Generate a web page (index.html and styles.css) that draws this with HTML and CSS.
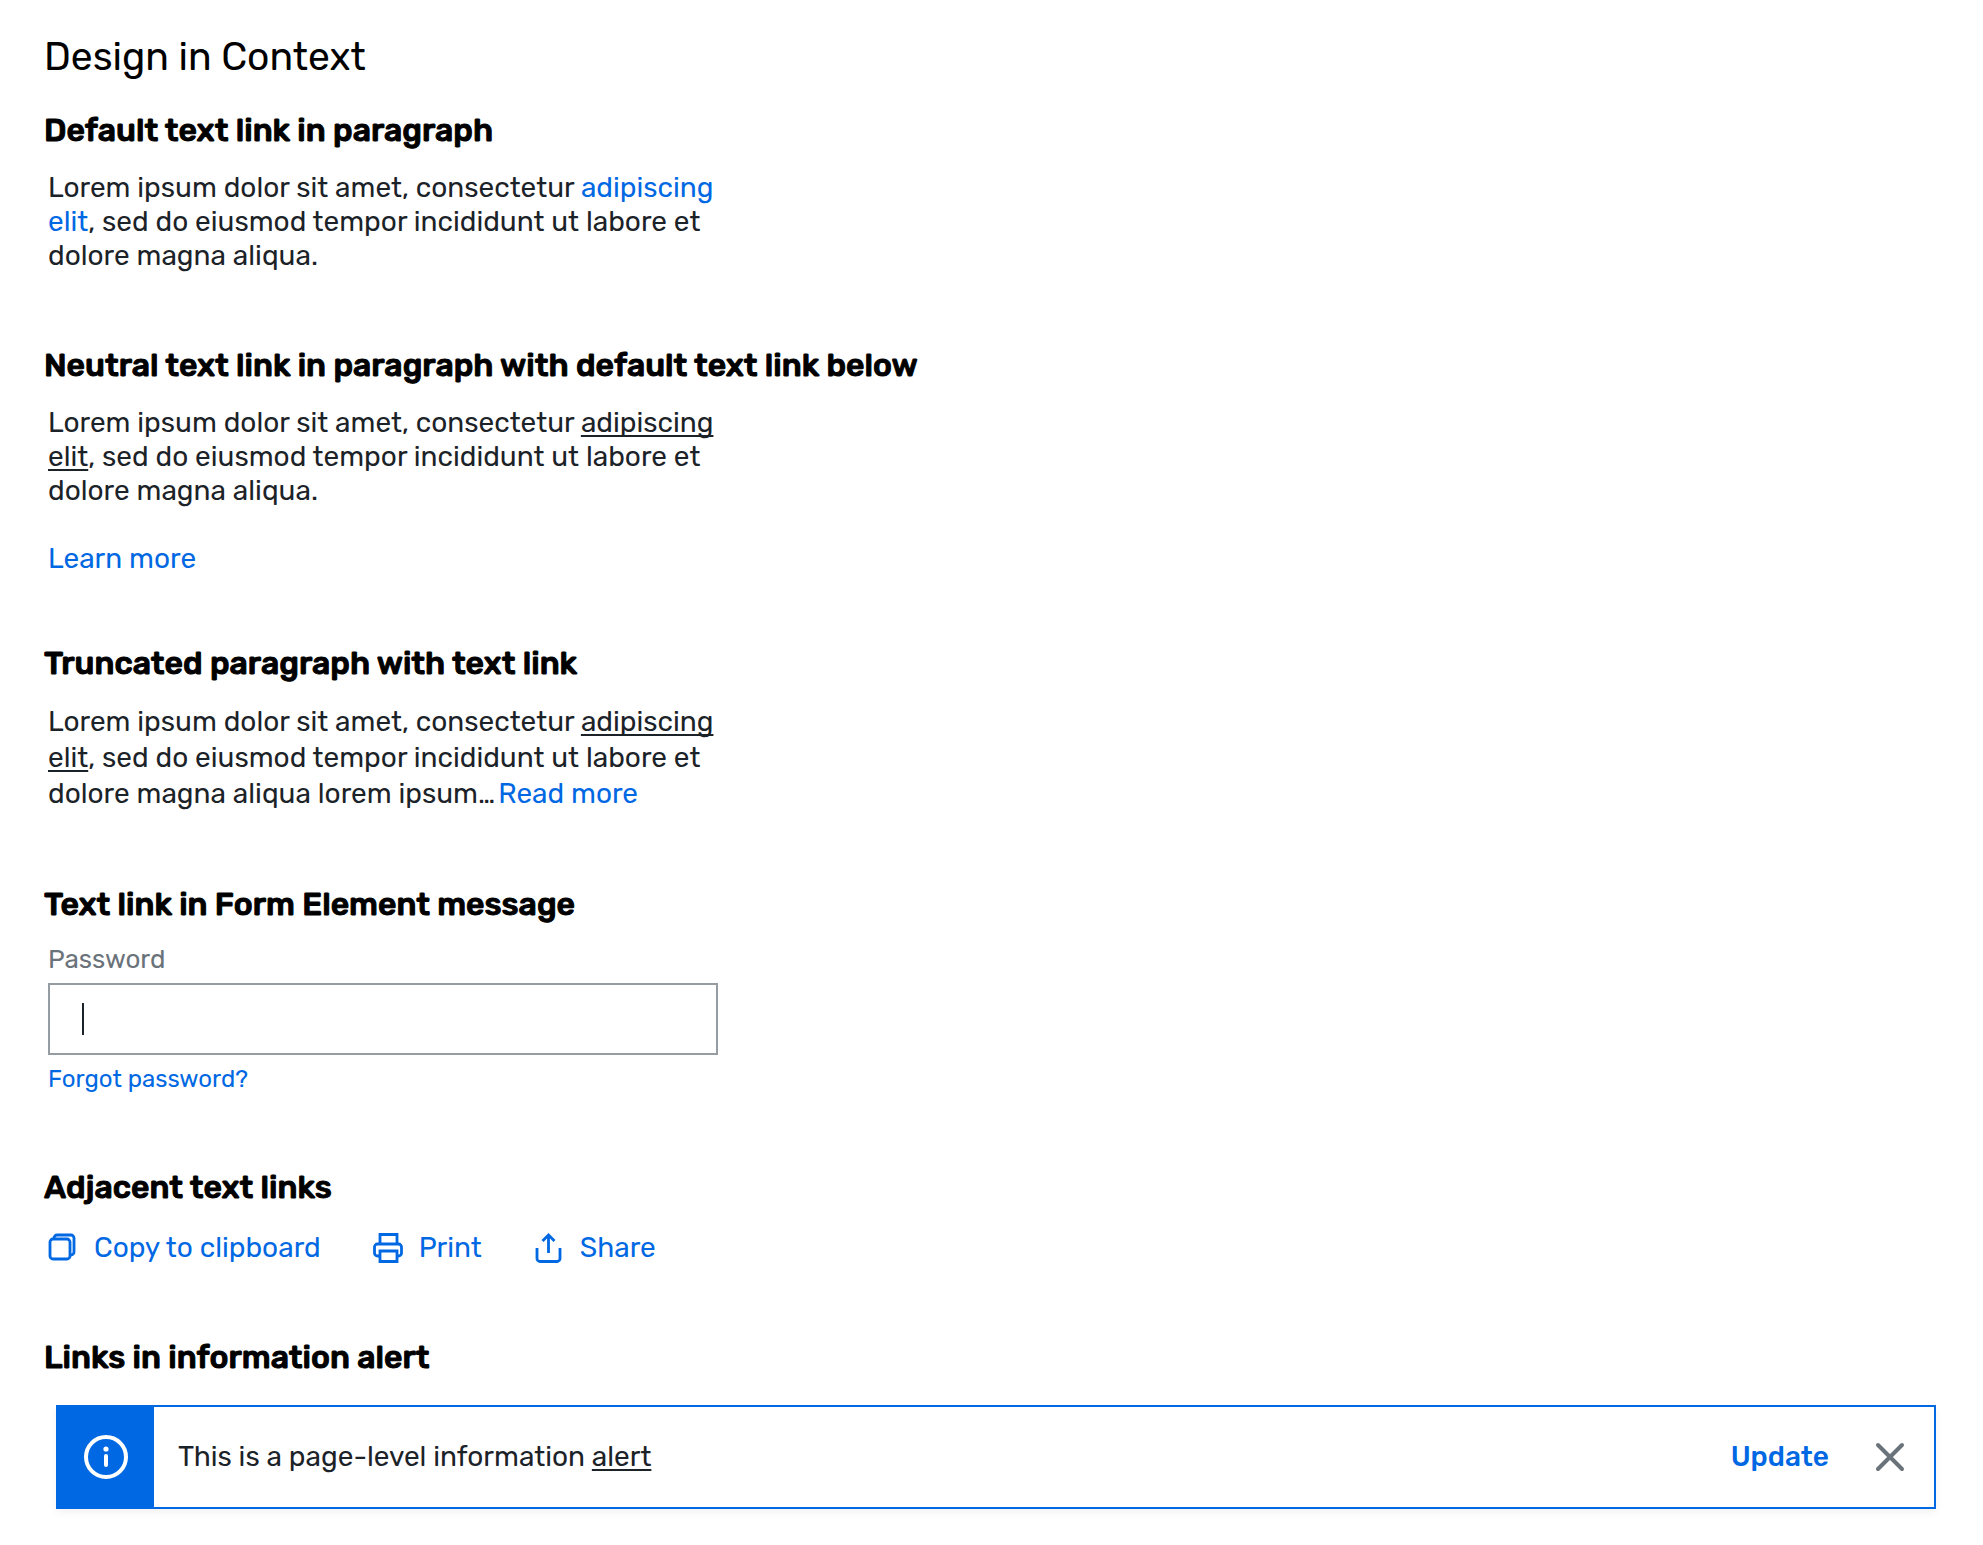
FILE: index.html
```html
<!DOCTYPE html>
<html lang="en">
<head>
    <meta charset="utf-8">
    <title>Design in Context</title>
    <link rel="stylesheet" href="styles.css">
</head>
<body>
    <main class="page">
        <h1>Design in Context</h1>

        <section>
            <h2>Default text link in paragraph</h2>
            <div class="content">
                <p>Lorem ipsum dolor sit amet, consectetur <a class="link" href="#">adipiscing elit</a>, sed do eiusmod tempor incididunt ut labore et dolore magna aliqua.</p>
            </div>
        </section>

        <section>
            <h2>Neutral text link in paragraph with default text link below</h2>
            <div class="content">
                <p>Lorem ipsum dolor sit amet, consectetur <a class="link neutral" href="#">adipiscing elit</a>, sed do eiusmod tempor incididunt ut labore et dolore magna aliqua.</p>
                <p class="more"><a class="link" href="#">Learn more</a></p>
            </div>
        </section>

        <section>
            <h2>Truncated paragraph with text link</h2>
            <div class="content">
                <p class="truncated">Lorem ipsum dolor sit amet, consectetur <a class="link neutral" href="#">adipiscing elit</a>, sed do eiusmod tempor incididunt ut labore et dolore magna aliqua lorem ipsum…<a class="link read-more" href="#">Read more</a></p>
            </div>
        </section>

        <section>
            <h2>Text link in Form Element message</h2>
            <div class="content field">
                <label for="password">Password</label>
                <div class="input-wrap">
                    <input type="password" id="password">
                    <span class="caret"></span>
                </div>
                <a class="link small" href="#">Forgot password?</a>
            </div>
        </section>

        <section>
            <h2>Adjacent text links</h2>
            <div class="link-row">
                <a class="link icon-link" href="#">
                    <svg width="30" height="30" viewBox="0 0 30 30">
                        <rect x="2" y="6" width="20" height="20" rx="3"/>
                        <path d="M6 5a3 3 0 0 1 3-3h14a3 3 0 0 1 3 3v14a3 3 0 0 1-3 3"/>
                    </svg>
                    <span>Copy to clipboard</span>
                </a>
                <a class="link icon-link" href="#">
                    <svg width="30" height="30" viewBox="0 0 30 30">
                        <path d="M7 11V1.500h17V11"/>
                        <path d="M7 23H4.500a3 3 0 0 1-3-3v-6a3 3 0 0 1 3-3h21a3 3 0 0 1 3 3v6a3 3 0 0 1-3 3H24"/>
                        <path d="M7 18h17v10.500H7z"/>
                    </svg>
                    <span>Print</span>
                </a>
                <a class="link icon-link" href="#">
                    <svg width="30" height="30" viewBox="0 0 30 30">
                        <path d="M3 15v10.500a3 3 0 0 0 3 3h17a3 3 0 0 0 3-3V15"/>
                        <path d="M14.500 20V2M8.500 8l6-6 6 6"/>
                    </svg>
                    <span>Share</span>
                </a>
            </div>
        </section>

        <section>
            <h2>Links in information alert</h2>
            <div class="alert" role="status">
                <div class="alert-icon">
                    <svg width="46" height="46" viewBox="0 0 46 46">
                        <circle cx="23" cy="23" r="20" fill="none" stroke="#fff" stroke-width="4"/>
                        <circle cx="23" cy="15" r="2.600" fill="#fff"/>
                        <path d="M23 22v9" stroke="#fff" stroke-width="4" stroke-linecap="round"/>
                    </svg>
                </div>
                <p class="alert-text">This is a page-level information <a class="link neutral" href="#">alert</a></p>
                <button class="update" type="button">Update</button>
                <button class="close" type="button" aria-label="Close">
                    <svg width="30" height="30" viewBox="0 0 30 30">
                        <path d="M3 3l24 24M27 3L3 27"/>
                    </svg>
                </button>
            </div>
        </section>
    </main>
</body>
</html>
```
FILE: styles.css
```css
* {
    box-sizing: border-box;
}
body {
    margin: 0;
    background: #fff;
    color: #1b2228;
    font-family: Rubik, Roboto, sans-serif;
    font-size: 28px;
    line-height: 34px;
}
.page {
    padding: 33px 47px 32px 44px;
}
h1 {
    margin: 0 0 29px;
    color: #000;
    font-size: 39px;
    font-weight: 400;
    line-height: 48px;
}
h2 {
    margin: 0 0 21px;
    color: #000;
    font-size: 32px;
    font-weight: 500;
    line-height: 40px;
    -webkit-text-stroke: 1px #000;
}
p {
    margin: 0;
}
section {
    margin-bottom: 72px;
}
section:last-child {
    margin-bottom: 0;
}
.content {
    max-width: 674px;
    padding-left: 4px;
}
.more {
    margin: 34px 0 -5px;
}
.truncated {
    line-height: 36px;
}
.link {
    color: #0068e3;
    text-decoration: none;
}
.link:hover {
    text-decoration: underline;
}
.neutral {
    color: inherit;
    text-decoration: underline;
    text-decoration-thickness: 2px;
    text-underline-offset: 3px;
    text-decoration-skip-ink: none;
}
.read-more {
    margin-left: 3px;
}
.small {
    font-size: 24px;
    line-height: 32px;
}
.field {
    display: flex;
    flex-direction: column;
    gap: 8px;
}
.field label {
    color: #6a727a;
    font-size: 26px;
    line-height: 30px;
}
.input-wrap {
    position: relative;
}
.input-wrap input {
    display: block;
    width: 100%;
    height: 72px;
    padding: 0 34px;
    border: 2px solid #969da2;
    border-radius: 0;
    background: #fff;
    font: inherit;
}
.caret {
    position: absolute;
    top: 20px;
    left: 34px;
    width: 2px;
    height: 32px;
    background: #1b2228;
}
.link-row {
    display: flex;
    gap: 52px;
    padding: 3px 0 0 4px;
}
.icon-link {
    display: flex;
    align-items: center;
    gap: 16px;
}
.icon-link svg {
    fill: none;
    stroke: currentColor;
    stroke-width: 2.8;
}
.alert {
    display: flex;
    align-items: center;
    margin: 28px 0 0 12px;
    border: 2px solid #0068e3;
    box-shadow: 0 4px 8px rgba(0, 0, 0, 0.05);
}
.alert-icon {
    display: flex;
    align-items: center;
    justify-content: center;
    width: 96px;
    height: 100px;
    background: #0068e3;
}
.alert-text {
    flex: 1;
    padding-left: 24px;
}
button {
    padding: 0;
    border: 0;
    background: none;
    font: inherit;
    cursor: pointer;
}
.update {
    color: #0068e3;
    font-weight: 500;
}
.close {
    display: flex;
    margin: 0 29px 0 46px;
}
.close svg {
    stroke: #6a727a;
    stroke-width: 4;
    stroke-linecap: round;
}
```
